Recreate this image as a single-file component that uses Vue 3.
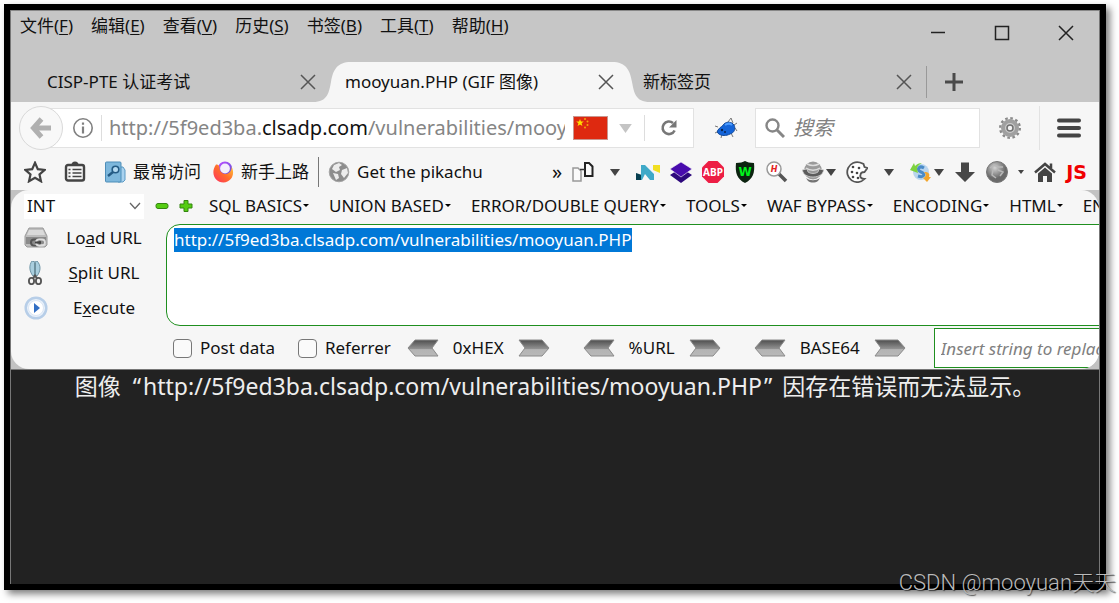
<template>
  <div class="page">
    <div class="window">
      <header class="title-bar">
        <nav class="menu-bar">
          <button v-for="m in menus" :key="m.key" class="menu-item" type="button">{{ m.label }}(<u>{{ m.key }}</u>)</button>
        </nav>
        <div class="window-controls">
          <button type="button" aria-label="最小化">
            <svg width="16" height="16" viewBox="0 0 16 16"><path d="M1 7.5h14" class="ctl" /></svg>
          </button>
          <button type="button" aria-label="最大化">
            <svg width="16" height="16" viewBox="0 0 16 16"><path d="M1.5 1.500h13v13h-13z" class="ctl" /></svg>
          </button>
          <button type="button" aria-label="关闭">
            <svg width="16" height="16" viewBox="0 0 16 16"><path d="M1 1l14 14M15 1L1 15" class="ctl" /></svg>
          </button>
        </div>
      </header>

      <div class="tab-strip">
        <div v-for="tab in tabs" :key="tab.title" class="tab" :class="{ active: tab.active }">
          <svg v-if="tab.active" class="curve curve-left" width="38" height="40" viewBox="0 0 38 40">
            <path d="M0 40C15 40 16 30 18 20C20 8 24 0 38 0V40Z" fill="#f6f6f6" />
          </svg>
          <svg v-if="tab.active" class="curve curve-right" width="38" height="40" viewBox="0 0 38 40">
            <path d="M38 40C23 40 22 30 20 20C18 8 14 0 0 0V40Z" fill="#f6f6f6" />
          </svg>
          <span class="tab-title">{{ tab.title }}</span>
          <button type="button" class="tab-close" aria-label="关闭标签页">
            <svg width="16" height="16" viewBox="0 0 16 16"><path d="M1 1l14 14M15 1L1 15" stroke="#555" stroke-width="1.5" /></svg>
          </button>
        </div>
        <span class="tab-divider"></span>
        <button type="button" class="new-tab" aria-label="新建标签页">
          <svg width="18" height="18" viewBox="0 0 18 18"><path d="M9 0v18M0 9h18" stroke="#4a4a4a" stroke-width="3" /></svg>
        </button>
      </div>

      <div class="nav-bar">
        <button type="button" class="back" aria-label="后退">
          <svg width="22" height="22" viewBox="0 0 22 22">
            <path d="M11.500 2L3.500 11l8 9M4 11h17" fill="none" stroke="#b0b0b0" stroke-width="5" />
          </svg>
        </button>
        <div class="url-bar">
          <svg class="info" width="22" height="22" viewBox="0 0 22 22">
            <circle cx="11" cy="11" r="9.2" fill="none" stroke="#808080" stroke-width="1.6" />
            <path d="M11 9.500v7M11 5.500v2.200" stroke="#808080" stroke-width="2.2" />
          </svg>
          <span class="url-line"></span>
          <a href="#" class="url-text">http://5f9ed3ba.<b>clsadp.com</b>/vulnerabilities/mooyuan.PHP</a>
          <svg class="flag" width="35" height="24" viewBox="0 0 35 24">
            <rect x="0.5" y="0.5" width="34" height="23" fill="#de2910" stroke="#c9968f" />
            <path d="M7 3l1 2.600h2.800l-2.200 1.700.8 2.700L7 8.400 4.600 10l.8-2.700-2.200-1.700H6z" fill="#ffde00" />
            <g fill="#f3a40c"><circle cx="12" cy="3" r="1" /><circle cx="14.5" cy="5.5" r="1" /><circle cx="14.5" cy="9" r="1" /><circle cx="12" cy="11.5" r="1" /></g>
          </svg>
          <svg class="drop" width="13" height="9" viewBox="0 0 14 10"><path d="M0 0h14L7 10z" fill="#c4c4c4" /></svg>
          <span class="url-line"></span>
          <button type="button" class="reload" aria-label="刷新">
            <svg width="18" height="18" viewBox="0 0 18 18">
              <path d="M13 4A6.300 6.300 0 1 0 14.600 11.500" fill="none" stroke="#777" stroke-width="2.6" />
              <path d="M16.500 1v7.500H9z" fill="#777" />
            </svg>
          </button>
        </div>
        <svg class="pig" width="24" height="22" viewBox="0 0 24 22">
          <path d="M4 10L1 9M5 14l-4 2M8 17l-1 4M17 16l2 4M14 5l3-4 2 5M20 8l3-2M21 11l2 3" fill="none" stroke="#777" />
          <path d="M4 13C6 10 9 9 10 7C13 4 18 5 20 8C22 12 20 16 16 17C12 19 8 19 5 17C3 16 3 14 4 13Z" fill="#1464d8" stroke="#134a9b" />
          <path d="M11 8c3-2 5-2 7 0" stroke="#4c9cff" stroke-width="2" fill="none" />
          <circle cx="8" cy="13" r="1.2" fill="#082454" /><circle cx="11" cy="15" r="1" fill="#082454" />
        </svg>
        <div class="search-box">
          <svg width="20" height="20" viewBox="0 0 20 20"><circle cx="7.5" cy="7.5" r="6" fill="none" stroke="#868686" stroke-width="2.4" /><path d="M12 12l7 7" stroke="#868686" stroke-width="3" /></svg>
          <input type="text" placeholder="搜索" aria-label="搜索" />
        </div>
        <svg class="gear" width="24" height="24" viewBox="0 0 24 24">
          <circle cx="12" cy="12" r="9.8" fill="none" stroke="#8a8a8a" stroke-width="2.4" stroke-dasharray="2.6 2.53" />
          <circle cx="12" cy="12" r="7" fill="#ccc" stroke="#a0a0a0" stroke-width="4" />
          <circle cx="12" cy="12" r="3" fill="#f4f4f4" stroke="#707070" stroke-width="1.5" />
        </svg>
        <span class="nav-line"></span>
        <button type="button" class="hamburger" aria-label="打开菜单">
          <svg width="24" height="20" viewBox="0 0 24 20"><path d="M2 2.500h20M2 10h20M2 17.500h20" stroke="#444" stroke-width="4" stroke-linecap="round" /></svg>
        </button>
      </div>

      <div class="bookmarks-bar">
        <div class="bookmarks">
          <svg width="22" height="22" viewBox="0 0 22 22"><path d="M11 1.800l2.800 6.400 6.900.7-5.200 4.600 1.500 6.800-6-3.500-6 3.500 1.500-6.800L1.300 8.900l6.900-.7z" fill="none" stroke="#444" stroke-width="2.2" /></svg>
          <svg width="22" height="22" viewBox="0 0 22 22">
            <rect x="2" y="4" width="18" height="15.5" rx="2" fill="none" stroke="#444" stroke-width="2.4" />
            <path d="M7.500 4a3.500 3.500 0 0 1 7 0" fill="#444" />
            <path d="M4.500 8.500h2M8.500 8.500h9M4.500 12h2M8.500 12h9M4.500 15.500h2M8.500 15.500h9" stroke="#444" stroke-width="1.6" />
          </svg>
          <a href="#" class="bookmark">
            <svg width="22" height="22" viewBox="0 0 22 22">
              <path d="M16 6h3l2 3v10l-2 2h-5z" fill="#a9d2ef" stroke="#5b9ac4" />
              <rect x="1.5" y="1" width="15.5" height="20" rx="1" fill="#7db7dc" stroke="#4d8db8" />
              <circle cx="11.5" cy="8.5" r="3.3" fill="#b4daf2" stroke="#245b85" stroke-width="1.6" /><path d="M9 11l-5 4" stroke="#245b85" stroke-width="2.4" />
            </svg>
            <span>最常访问</span>
          </a>
          <a href="#" class="bookmark">
            <svg width="22" height="22" viewBox="0 0 22 22">
              <defs>
                <linearGradient id="fox" x1="0" y1="1" x2="1" y2="0"><stop offset="0" stop-color="#ff2f62" /><stop offset="0.5" stop-color="#ff6b2c" /><stop offset="1" stop-color="#ffd43a" /></linearGradient>
                <linearGradient id="globe" x1="0" y1="0" x2="1" y2="1"><stop offset="0" stop-color="#b84dff" /><stop offset="1" stop-color="#6652d9" /></linearGradient>
              </defs>
              <circle cx="13" cy="7.5" r="6" fill="#f4effb" stroke="url(#globe)" stroke-width="2.2" />
              <path d="M4 3.500C6 3 7 4.500 7.500 6C7 10 10 13.500 14 13C18 12.500 20 9 19.500 5.500C23.500 13 19.500 21 11.500 21.500C3 21.500-2 12 4 3.500Z" fill="url(#fox)" />
            </svg>
            <span>新手上路</span>
          </a>
          <span class="bookmark-line"></span>
          <a href="#" class="bookmark">
            <svg width="22" height="22" viewBox="0 0 22 22">
              <circle cx="11" cy="11" r="9.8" fill="#8d8d8d" stroke="#a5a5a5" />
              <path d="M6 4l5-2 3 2-3 2 1 3-4 2-4-3zM14 9l5-2 1 5-4 5-3-4zM5 12l5 1 1 4-3 2z" fill="#ececec" />
            </svg>
            <span>Get the pikachu</span>
          </a>
        </div>

        <div class="add-ons">
          <span class="more">»</span>
          <svg width="22" height="22" viewBox="0 0 22 22">
            <path d="M1 7h5l3 3v10H1z" fill="#fafafa" stroke="#999" stroke-width="1.5" />
            <path d="M13 2h4l3.500 3.500V15H13z" fill="#fafafa" stroke="#222" stroke-width="2" /><path d="M8 8.500h5" stroke="#333" stroke-width="1.5" />
          </svg>
          <svg class="arrow lone" width="10" height="7" viewBox="0 0 10 7"><path d="M0 0h10L5 7z" /></svg>
          <svg width="24" height="22" viewBox="0 0 24 22">
            <path d="M0 12l6 2v5H0z" fill="#073f50" /><path d="M5 4h4l9 9V7v12h-4L9 13l-3 6H5z" fill="#3fa9c8" /><path d="M17 4h7v8l-7-3z" fill="#f1df22" />
          </svg>
          <svg width="22" height="22" viewBox="0 0 22 22"><path d="M0 14l11-7 11 7-11 8z" fill="#2d087c" /><path d="M0 8l11-7 11 7-11 8z" fill="#480bad" stroke="#f6f6f6" stroke-width="0.6" /></svg>
          <svg width="22" height="22" viewBox="0 0 22 22"><path d="M6.500 0h9L22 6.500v9L15.500 22h-9L0 15.500v-9z" fill="#ed1e45" /><text x="11" y="15" text-anchor="middle" class="abp">ABP</text></svg>
          <svg width="22" height="22" viewBox="0 0 22 22"><path d="M2 2C6 2 9 1 11 0c2 1 5 2 9 2 1 10-1 16-9 20C3 18 1 12 2 2z" fill="#0c2310" /><text x="11" y="15" text-anchor="middle" class="shield">W</text></svg>
          <svg width="22" height="22" viewBox="0 0 22 22"><path d="M13 13l7 7" stroke="#555" stroke-width="3.5" /><circle cx="8" cy="8" r="7" fill="#fff" stroke="#999" stroke-width="1.5" /><text x="8" y="11" text-anchor="middle" class="hunt">H</text></svg>
          <div class="combo first">
            <svg width="22" height="22" viewBox="0 0 22 22">
              <circle cx="11" cy="9.5" r="9" fill="#9a9a9a" /><path d="M4 7c4 3 10 3 14 0M5 3c4 2 8 2 12 0" stroke="#dcdcdc" fill="none" stroke-width="1.5" />
              <path d="M0 9l5-1 1 3c3 2 7 2 10 0l1-3 5 1-2 4c-5 4-13 4-18 0z" fill="#5c5c5c" stroke="#ddd" stroke-width="0.7" /><path d="M4 17c4 3 10 3 14 0l-2 3c-3 2-7 2-10 0z" fill="#747474" />
            </svg>
            <svg class="arrow" width="10" height="7" viewBox="0 0 10 7"><path d="M0 0h10L5 7z" /></svg>
          </div>
          <svg width="22" height="22" viewBox="0 0 22 22">
            <path d="M14 1.500A10 10 0 1 0 18.500 18c-3 0-5-2-4-4 0-3 2-3 4-3l3-4-3-1-1-3z" fill="#fff" stroke="#555" stroke-width="1.8" />
            <g fill="#444"><circle cx="7" cy="6" r="1.3" /><circle cx="13" cy="7" r="1.3" /><circle cx="6" cy="11" r="1.3" /><circle cx="11" cy="12" r="1.3" /><circle cx="7" cy="16" r="1.3" /><circle cx="12" cy="17" r="1.3" /></g>
          </svg>
          <svg class="arrow lone" width="10" height="7" viewBox="0 0 10 7"><path d="M0 0h10L5 7z" /></svg>
          <div class="combo">
            <svg width="22" height="22" viewBox="0 0 22 22">
              <circle cx="11" cy="11" r="8" fill="#b9d5ee" /><path d="M14 7c-5-3-8 2-3 4s3 6-3 4" fill="none" stroke="#4a8bc8" stroke-width="3" />
              <path d="M0 9l4-7 1 3c2-2 4-3 7-3-4 2-5 4-5 6l1 4z" fill="#7dd23f" /><path d="M14 11c5 0 6 2 5 5l2 0-4 5-4-4 2-1c1-2 1-3-1-5z" fill="#f2a62c" />
            </svg>
            <svg class="arrow" width="10" height="7" viewBox="0 0 10 7"><path d="M0 0h10L5 7z" /></svg>
          </div>
          <svg width="22" height="22" viewBox="0 0 22 22"><path d="M7 1.500h8V11h6L11 21 1 11h6z" fill="#474747" /></svg>
          <svg width="22" height="22" viewBox="0 0 22 22">
            <defs><radialGradient id="ball" cx="0.4" cy="0.3"><stop offset="0" stop-color="#d2d2d2" /><stop offset="1" stop-color="#6a6a6a" /></radialGradient></defs>
            <circle cx="11" cy="11" r="10.5" fill="url(#ball)" stroke="#777" /><path d="M4 7l4-3 4 2 5 0M7 9l-1 5 4 3M12 9l5 2-3 4" fill="none" stroke="#b8b8b8" stroke-width="1.5" />
          </svg>
          <svg class="arrow" width="6" height="4" viewBox="0 0 6 4"><path d="M0 0h6L3 4z" /></svg>
          <svg width="22" height="22" viewBox="0 0 22 22"><path d="M1 11.500L11 3l10 8.500M17 7V2.500" fill="none" stroke="#444" stroke-width="2.5" /><path d="M4 12.500l7-6 7 6V21h-5v-6H9v6H4z" fill="#444" /></svg>
          <span class="js">JS</span>
        </div>
      </div>

      <section class="hackbar">
        <div class="hackbar-inner">
          <div class="hack-menus">
            <div class="db-select">
              <select aria-label="INT"><option>INT</option></select>
              <svg width="12" height="8" viewBox="0 0 12 8"><path d="M1 1l5 5.500L11 1" fill="none" stroke="#666" stroke-width="1.3" /></svg>
            </div>
            <button type="button" class="sign" aria-label="减少">
              <svg width="14" height="14" viewBox="0 0 14 14"><rect x="1" y="4.5" width="12" height="5" rx="2" fill="#55cc12" stroke="#348510" /></svg>
            </button>
            <button type="button" class="sign" aria-label="增加">
              <svg width="14" height="14" viewBox="0 0 14 14"><path d="M5 1.500h4V5h4v4H9v3.500H5V9H1V5h4z" fill="#55cc12" stroke="#348510" stroke-linejoin="round" /></svg>
            </button>
            <div class="attack-menus">
              <button v-for="item in attacks" :key="item" type="button">
                {{ item }}<svg width="7" height="4" viewBox="0 0 7 4"><path d="M1 0h6L4 3z" /></svg>
              </button>
            </div>
          </div>

          <div class="hack-body">
            <div class="hack-actions">
              <button type="button">
                <svg width="24" height="24" viewBox="0 0 24 24">
                  <path d="M5 2h14l4 8v9l-2 2H3l-2-2v-9z" fill="#bdbdbd" stroke="#999" /><path d="M5 4h14l2 5H3z" fill="#dadada" /><path d="M2 11h20v7H2z" fill="#8b8b8b" />
                  <rect x="7" y="13.5" width="9" height="6" rx="3" fill="none" stroke="#555" stroke-width="2" /><rect x="12" y="13.5" width="9" height="6" rx="3" fill="none" stroke="#dedede" stroke-width="1.8" /><path d="M11 16.500h6" stroke="#444" stroke-width="2" />
                </svg>
                <span>Lo<u>a</u>d URL</span>
              </button>
              <button type="button">
                <svg width="24" height="24" viewBox="0 0 24 24">
                  <path d="M8 0c-3 4-3 10 1 15h2V1zM13 0c4 4 4 10 0 15h-2V1z" fill="#a9cede" stroke="#7095a6" /><path d="M11 2v14" stroke="#5f7e8a" />
                  <ellipse cx="7.5" cy="20" rx="2.6" ry="3.2" fill="none" stroke="#555" stroke-width="1.8" /><ellipse cx="14.5" cy="20" rx="2.6" ry="3.2" fill="none" stroke="#555" stroke-width="1.8" /><path d="M9 17l3-3M13 17l-3-3" stroke="#555" stroke-width="2" />
                </svg>
                <span><u>S</u>plit URL</span>
              </button>
              <button type="button">
                <svg width="24" height="24" viewBox="0 0 24 24">
                  <circle cx="12" cy="12" r="10.3" fill="#e9f1fa" stroke="#b7cee8" stroke-width="2.5" /><circle cx="12" cy="12" r="7.5" fill="#fff" stroke="#dce7f5" /><path d="M10 7l6 5-6 5z" fill="#326fc4" />
                </svg>
                <span>E<u>x</u>ecute</span>
              </button>
            </div>
            <textarea ref="urlField" v-model="url" aria-label="URL" spellcheck="false"></textarea>
          </div>

          <div class="hack-footer">
            <label><input v-model="postData" type="checkbox" />Post data</label>
            <label><input v-model="referrer" type="checkbox" />Referrer</label>
            <div v-for="codec in codecs" :key="codec" class="codec">
              <button type="button" :aria-label="codec + ' 解码'">
                <svg width="32" height="18" viewBox="0 0 32 18"><path d="M8 1h23l-6 8 6 8H8L1 9z" fill="url(#steel)" stroke="#8a8a8a" /></svg>
              </button>
              <span>{{ codec }}</span>
              <button type="button" :aria-label="codec + ' 编码'">
                <svg width="32" height="18" viewBox="0 0 32 18">
                  <defs><linearGradient id="steel" x1="0" y1="0" x2="0" y2="1"><stop offset="0" stop-color="#4e4e4e" /><stop offset="0.55" stop-color="#929292" /><stop offset="0.6" stop-color="#b4b4b4" /><stop offset="1" stop-color="#b8b8b8" /></linearGradient></defs>
                  <path d="M1 1h23l7 8-7 8H1l6-8z" fill="url(#steel)" stroke="#8a8a8a" />
                </svg>
              </button>
            </div>
            <input class="replace" type="text" placeholder="Insert string to replace" aria-label="Insert string to replace" />
          </div>
        </div>
      </section>

      <main class="viewport">
        <p>图像<span class="quote-open">“</span>{{ url }}<span class="quote-close">”</span>因存在错误而无法显示。</p>
      </main>
    </div>
    <div class="watermark">CSDN @mooyuan天天</div>
  </div>
</template>

<script setup>
import { ref, onMounted } from 'vue'

const menus = [
  { label: '文件', key: 'F' },
  { label: '编辑', key: 'E' },
  { label: '查看', key: 'V' },
  { label: '历史', key: 'S' },
  { label: '书签', key: 'B' },
  { label: '工具', key: 'T' },
  { label: '帮助', key: 'H' }
]

const tabs = [
  { title: 'CISP-PTE 认证考试' },
  { title: 'mooyuan.PHP (GIF 图像)', active: true },
  { title: '新标签页' }
]

const attacks = ['SQL BASICS', 'UNION BASED', 'ERROR/DOUBLE QUERY', 'TOOLS', 'WAF BYPASS', 'ENCODING', 'HTML', 'ENCRYPTION']
const codecs = ['0xHEX', '%URL', 'BASE64']

const url = ref('http://5f9ed3ba.clsadp.com/vulnerabilities/mooyuan.PHP')
const urlField = ref(null)
const postData = ref(false)
const referrer = ref(false)

// 打开时选中整个地址
onMounted(() => {
  urlField.value.focus()
  urlField.value.select()
})
</script>

<style>
body {
  margin: 0;
  background: #fff;
}
</style>

<style scoped>
* {
  box-sizing: border-box;
}

.page {
  position: relative;
  display: flex;
  min-height: 100vh;
  padding: 4px 13px 13px 4px;
  overflow: hidden;
  font-family: "Noto Sans", "Noto Sans CJK SC", sans-serif;
  font-size: 17px;
  line-height: 24px;
  color: #111;
}

.window {
  flex: 1;
  min-width: 0;
  display: flex;
  flex-direction: column;
  overflow: hidden;
  padding: 0 1px;
  border: 6px solid #000;
  box-shadow: 4px 4px 7px rgba(0, 0, 0, 0.5);
  background: #777;
}

button {
  padding: 0;
  border: 0;
  background: none;
  font: inherit;
  color: inherit;
  white-space: nowrap;
}

svg {
  display: block;
  flex: none;
}

u {
  text-underline-offset: 2px;
}

.title-bar {
  display: flex;
  justify-content: space-between;
  height: 52px;
  padding: 3px 25px 0 9px;
  border-top: 1px solid #888;
  background: #c6c6c6;
}

.menu-bar {
  display: flex;
  align-items: flex-start;
  gap: 18px;
}

.window-controls {
  display: flex;
  align-items: center;
  gap: 48px;
  height: 38px;
}

.ctl {
  fill: none;
  stroke: #222;
  stroke-width: 1.5;
}

.tab-strip {
  display: flex;
  align-items: center;
  height: 40px;
  padding-left: 21px;
  background: #c6c6c6;
}

.tab {
  position: relative;
  flex: 0 1 298px;
  display: flex;
  align-items: center;
  justify-content: space-between;
  height: 40px;
  padding: 0 14px 0 15px;
}

.tab.active::before {
  content: "";
  position: absolute;
  inset: 0 13px 0 20px;
  background: #f6f6f6;
}

.tab-title,
.tab-close {
  position: relative;
  white-space: nowrap;
}

.curve {
  position: absolute;
  top: 0;
}

.curve-left {
  left: -17px;
}

.curve-right {
  right: -22px;
}

.tab-divider {
  width: 1px;
  height: 32px;
  background: #999;
}

.new-tab {
  margin-left: 18px;
}

.nav-bar {
  display: flex;
  align-items: center;
  height: 52px;
  padding: 0 18px 0 8px;
  background: #f6f6f6;
}

.back {
  position: relative;
  flex: none;
  display: flex;
  align-items: center;
  justify-content: center;
  width: 44px;
  height: 44px;
  border: 1px solid #d9d9d9;
  border-radius: 50%;
  background: #f8f8f8;
}

.url-bar {
  flex: 650 1 0;
  min-width: 0;
  display: flex;
  align-items: center;
  height: 40px;
  margin-left: -15px;
  padding: 0 15px 0 23px;
  border: 1px solid #e2e2e2;
  background: #fff;
}

.url-line {
  flex: none;
  width: 1px;
  height: 26px;
  margin: 0 7px;
  background: #ddd;
}

.url-text {
  flex: 1;
  min-width: 0;
  overflow: hidden;
  font-size: 20px;
  line-height: 30px;
  color: #858585;
  text-decoration: none;
  white-space: nowrap;
}

.url-text b {
  font-weight: 400;
  color: #111;
}

.flag {
  margin-left: 8px;
}

.drop {
  margin: 0 5px 0 11px;
}

.reload {
  margin-left: 8px;
}

.pig {
  margin: 0 17px 0 20px;
}

.search-box {
  flex: 220 1 0;
  min-width: 0;
  display: flex;
  align-items: center;
  gap: 8px;
  height: 40px;
  padding: 0 9px;
  border: 1px solid #e2e2e2;
  background: #fff;
}

.search-box input {
  flex: 1;
  min-width: 0;
  padding: 0;
  border: 0;
  outline: none;
  background: none;
  font: italic 20px/30px "Noto Sans", "Noto Sans CJK SC", sans-serif;
}

input::placeholder {
  color: #808080;
  opacity: 1;
}

.gear {
  margin: 0 17px 0 18px;
}

.nav-line {
  width: 1px;
  height: 44px;
  margin-right: 17px;
  background: #e2e2e2;
}

.bookmarks-bar {
  display: flex;
  align-items: center;
  justify-content: space-between;
  height: 36px;
  padding: 0 12px 0 13px;
  background: #f6f6f6;
}

.bookmarks {
  display: flex;
  align-items: center;
  gap: 18px;
}

.bookmark {
  display: flex;
  align-items: center;
  gap: 7px;
  color: #111;
  text-decoration: none;
  white-space: nowrap;
}

.bookmark + .bookmark {
  margin-left: -7px;
}

.bookmark-line {
  width: 1px;
  height: 30px;
  margin: 0 -9px;
  background: #777;
}

.add-ons {
  display: flex;
  align-items: center;
  gap: 10px;
}

.more {
  font-size: 20px;
  line-height: 20px;
}

.arrow {
  fill: #444;
}

.lone {
  margin: 0 6px;
}

.combo {
  display: flex;
  align-items: center;
  gap: 2px;
}

.combo.first {
  margin-left: 4px;
}

.abp {
  font: bold 10px "Noto Sans", sans-serif;
  fill: #fff;
}

.shield {
  font: bold 12px "DejaVu Sans", sans-serif;
  fill: #00f31b;
}

.hunt {
  font: italic bold 8px "DejaVu Sans", sans-serif;
  fill: #e32222;
}

.js {
  font: bold 19px/22px "DejaVu Sans", sans-serif;
  color: #f00000;
}

.hackbar {
  background: #c2c2c2;
}

.hackbar-inner {
  overflow: hidden;
  padding: 3px 0 0 13px;
  border-radius: 18px;
  background: #f6f6f6;
}

.hack-menus {
  display: flex;
  align-items: center;
  height: 26px;
}

.db-select {
  flex: none;
  position: relative;
  width: 120px;
  margin-right: 11px;
}

.db-select select {
  appearance: none;
  display: block;
  width: 100%;
  height: 25px;
  padding: 0 3px;
  border: 0;
  border-radius: 0;
  background: #fff;
  font: inherit;
  line-height: 24px;
  color: #111;
}

.db-select svg {
  position: absolute;
  top: 8px;
  right: 3px;
  pointer-events: none;
}

.sign {
  margin-right: 10px;
}

.attack-menus {
  display: flex;
  gap: 20px;
  margin-left: 6px;
}

.attack-menus button {
  display: flex;
  align-items: center;
}

.hack-body {
  display: flex;
  gap: 14px;
  padding-top: 5px;
}

.hack-actions {
  flex: none;
  display: flex;
  flex-direction: column;
  width: 128px;
}

.hack-actions button {
  display: flex;
  align-items: center;
  height: 35px;
  margin-top: -4px;
  margin-bottom: 4px;
}

.hack-actions span {
  flex: 1;
  padding-left: 8px;
  text-align: center;
}

textarea {
  flex: 1;
  height: 102px;
  margin-right: -20px;
  padding: 3px 7px;
  border: 1px solid #1f8f1f;
  border-radius: 14px;
  outline: none;
  resize: none;
  background: #fff;
  font: inherit;
  color: #111;
}

textarea::selection {
  background: #0078d7;
  color: #fff;
}

.hack-footer {
  display: flex;
  align-items: center;
  height: 40px;
  padding: 0 0 2px 149px;
}

.hack-footer label {
  flex: none;
  display: flex;
  align-items: center;
  gap: 8px;
  margin-right: 23px;
}

.hack-footer input[type="checkbox"] {
  appearance: none;
  width: 19px;
  height: 19px;
  margin: 0;
  border: 1px solid #777;
  border-radius: 4px;
  background: #fafafa;
}

.hack-footer label + .codec {
  margin-left: -7px;
}

.codec {
  flex: none;
  display: flex;
  align-items: center;
  gap: 14px;
  margin-right: 33px;
}

.hack-footer .replace {
  flex: 1 0 220px;
  height: 40px;
  margin-left: -5px;
  padding: 0 6px;
  border: 1px solid #1f8f1f;
  outline: none;
  background: #fff;
  font: italic 17px/24px "Noto Sans", sans-serif;
}

.viewport {
  flex: 1;
  border-top: 1px solid #777;
  background: #222;
}

.viewport p {
  margin: 0;
  font-size: 23px;
  line-height: 32px;
  color: #eee;
  text-align: center;
}

.quote-open {
  padding: 0 2px 0 12px;
}

.quote-close {
  padding: 0 10px 0 2px;
}

.watermark {
  position: absolute;
  right: 3px;
  bottom: 6px;
  font: 22px/28px Roboto, "Noto Sans CJK SC", sans-serif;
  font-weight: 300;
  color: #bbb;
  text-shadow: 1px 1px 1px rgba(0, 0, 0, 0.6);
}
</style>
